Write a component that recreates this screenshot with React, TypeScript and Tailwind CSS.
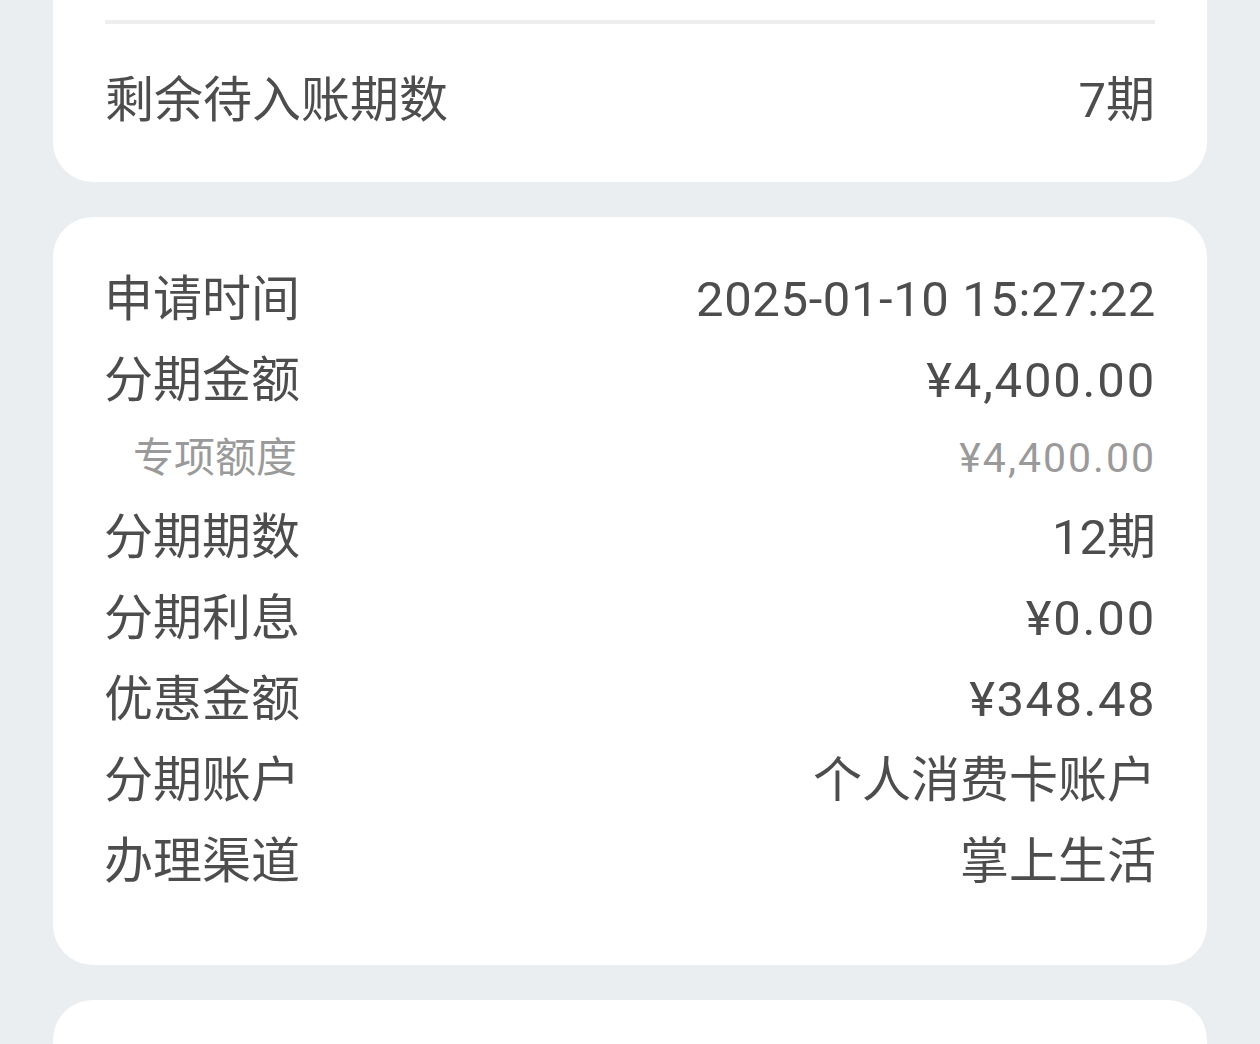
import React from 'react'

interface Row {
  label: string
  value: string
  sub?: boolean
  track?: string
}

const rows: Row[] = [
  { label: '申请时间', value: '2025-01-10 15:27:22', track: 'tracking-[0.6px]' },
  { label: '分期金额', value: '¥4,400.00', track: 'tracking-[1.8px]' },
  { label: '专项额度', value: '¥4,400.00', sub: true, track: 'tracking-[2px]' },
  { label: '分期期数', value: '12期' },
  { label: '分期利息', value: '¥0.00', track: 'tracking-[1.8px]' },
  { label: '优惠金额', value: '¥348.48', track: 'tracking-[1.5px]' },
  { label: '分期账户', value: '个人消费卡账户' },
  { label: '办理渠道', value: '掌上生活' },
]

const font = "font-['Roboto','Noto_Sans_CJK_SC',sans-serif]"

export default function App() {
  return (
    <main className={`min-h-screen bg-[#eaeef1] px-[53px] text-[#4d4d4d] ${font}`}>
      {/* 上一张卡片的底部 */}
      <section className="bg-white rounded-b-[40px] px-[52px] pt-[20px] pb-[41px]">
        <div className="h-[4px] bg-[#eeeeee]" />
        <div className="mt-[36px] h-[81px] flex items-center justify-between text-[49px]">
          <span>剩余待入账期数</span>
          <span>7期</span>
        </div>
      </section>

      {/* 分期详情 */}
      <section className="mt-[35px] bg-white rounded-[40px] pl-[51px] pr-[51px] pt-[42px] pb-[63px]">
        {rows.map((row) =>
          row.sub ? (
            <div
              key={row.label}
              className="h-[76px] flex items-center justify-between text-[41px] text-[#9a9a9a]"
            >
              <span className="pl-[29px]">{row.label}</span>
              <span className={row.track}>{row.value}</span>
            </div>
          ) : (
            <div
              key={row.label}
              className="h-[81px] flex items-center justify-between text-[49px]"
            >
              <span>{row.label}</span>
              <span className={row.track}>{row.value}</span>
            </div>
          )
        )}
      </section>

      <section className="mt-[35px] bg-white rounded-t-[40px] h-[200px]" />
    </main>
  )
}
